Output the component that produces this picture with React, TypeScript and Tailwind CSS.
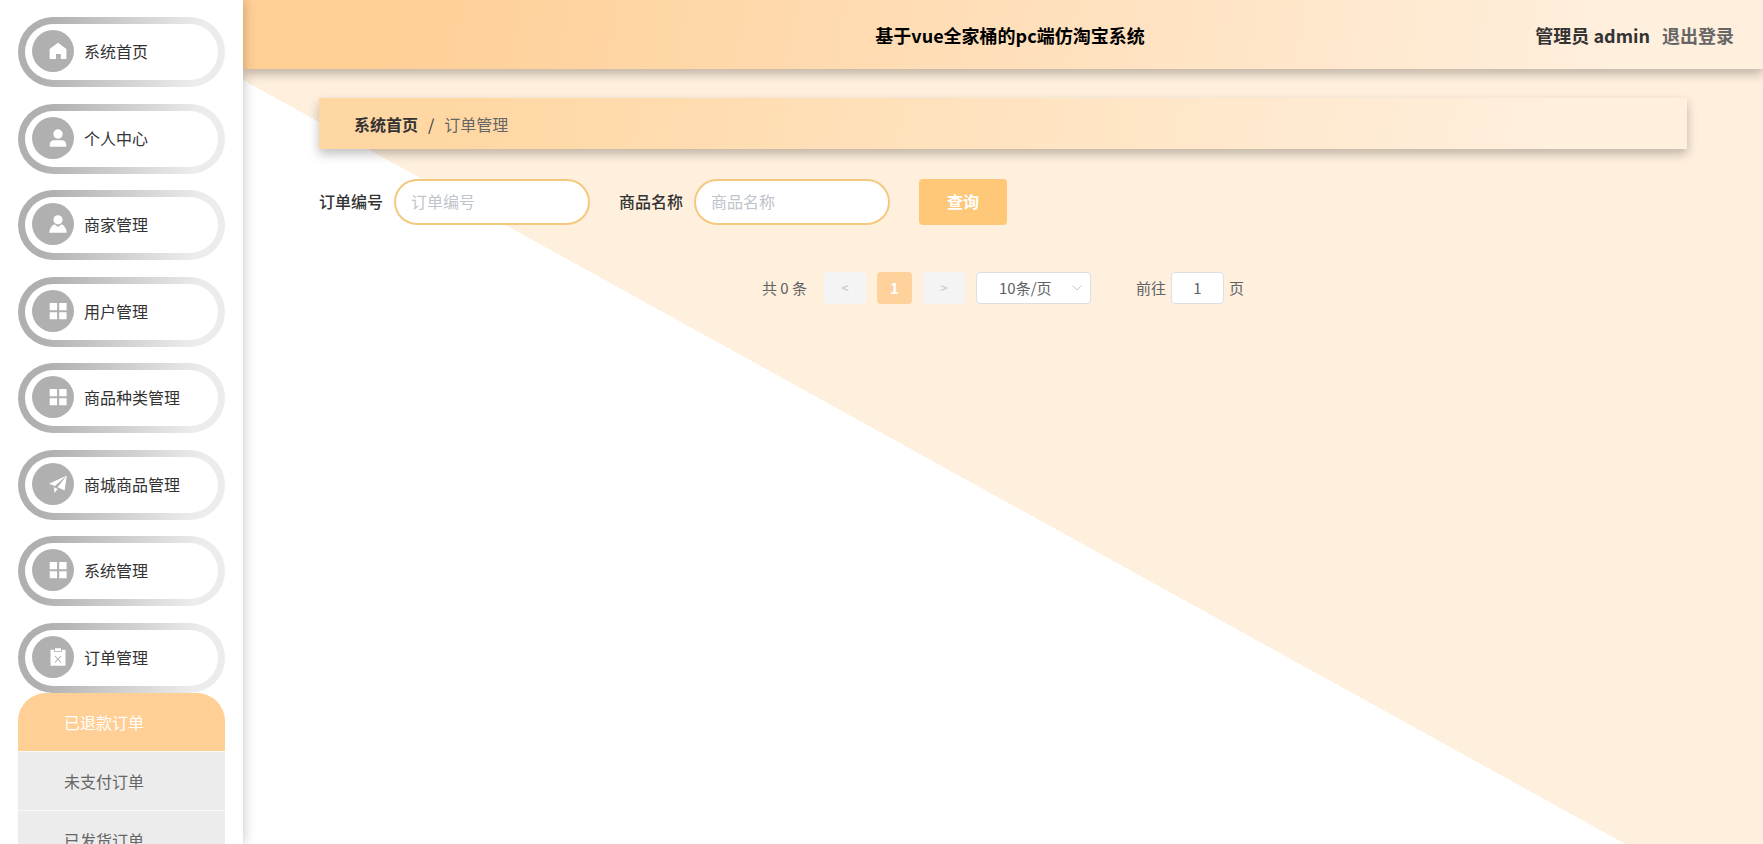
import { useState } from "react";
import type { ReactNode } from "react";

type MenuItem = {
  name: string;
  icon: ReactNode;
};

const GridIcon = () => (
  <svg viewBox="0 0 18 18" className="size-[18px]" fill="currentColor">
    <path d="M.7 1h7.400v7.200H.7zM10.200 1h7.400v7.200h-7.400zM.7 10.200h7.400v7H.7zM10.200 10.200h7.400v7h-7.400z" />
  </svg>
);

const HomeIcon = () => (
  <svg viewBox="0 0 18 18" className="size-[18px]" fill="currentColor">
    <path d="M9 .8 17.400 7v9.200a.8.8 0 0 1-.8.8h-4.800v-5H7v5H1.400a.8.8 0 0 1-.8-.8V7z" />
  </svg>
);

const UserIcon = () => (
  <svg viewBox="0 0 18 18" className="size-[18px]" fill="currentColor">
    <circle cx="9" cy="5" r="4.700" />
    <path d="M.8 17.800v-2.300c0-2.700 1.700-4.300 4.400-4.300h7.600c2.700 0 4.400 1.600 4.400 4.300v2.300z" />
  </svg>
);

const CustomIcon = () => (
  <svg viewBox="0 0 18 18" className="size-[18px]" fill="currentColor">
    <circle cx="9" cy="4.800" r="4.600" />
    <path d="M5.400 9.300 9 12l3.600-2.700c2.900 1.300 4.800 4.300 5.200 8.400H.2c.4-4.100 2.300-7.100 5.200-8.400z" />
  </svg>
);

const PromotionIcon = () => (
  <svg viewBox="0 0 18 18" className="size-[18px]" fill="currentColor">
    <path d="M0 8.800 17.800.4 5.800 11zM17.800.4l-2.200 15.200-7-3.400zM5.100 12.200l3.500 1.800-3.100 4z" />
  </svg>
);

const ReleaseIcon = () => (
  <svg viewBox="0 0 18 18" className="size-[18px]" fill="currentColor">
    <path d="M6 .2h6v3H6z" />
    <path d="M1.500 1.800h3.700v2.300h7.600V1.800h3.700v16h-15z" />
    <path d="m6 8 6 6.500M12 8l-6 6.500" stroke="#b0b0b0" strokeWidth="1.100" />
  </svg>
);

const menu: MenuItem[] = [
  { name: "系统首页", icon: <HomeIcon /> },
  { name: "个人中心", icon: <UserIcon /> },
  { name: "商家管理", icon: <CustomIcon /> },
  { name: "用户管理", icon: <GridIcon /> },
  { name: "商品种类管理", icon: <GridIcon /> },
  { name: "商城商品管理", icon: <PromotionIcon /> },
  { name: "系统管理", icon: <GridIcon /> },
  { name: "订单管理", icon: <ReleaseIcon /> },
];

const orders = ["已退款订单", "未支付订单", "已发货订单"];

const Sidebar = () => {
  const [active, setActive] = useState<string>("已退款订单");
  return (
    <aside className="relative z-20 w-[243px] shrink-0 overflow-hidden bg-white px-[18px] pt-[17px] shadow-[0_0_12px_rgba(0,0,0,0.25)]">
      <ul className="flex h-[676px] flex-col justify-between">
        {menu.map((m) => (
          <li key={m.name}>
            <button className="block w-full rounded-full bg-[linear-gradient(100deg,#b0b0b0_15%,#ececec_85%)] p-[7px]">
              <span className="flex h-14 items-center rounded-full bg-white pb-[2px] pl-[7px]">
                <span className="flex size-[42px] items-center justify-end rounded-full bg-[#b0b0b0] pr-[7px] text-white">
                  {m.icon}
                </span>
                <span className="pl-[10px] text-base text-[#333]">{m.name}</span>
              </span>
            </button>
          </li>
        ))}
      </ul>
      <ul className="overflow-hidden rounded-t-[28px]">
        {orders.map((o) => (
          <li key={o} className="border-b border-[#f8f8f8]">
            <button
              onClick={() => setActive(o)}
              className={`block h-[58px] w-full pl-[46px] text-left text-base ${
                active === o ? "bg-[#ffcf96] text-white" : "bg-[#ececec] text-[#666]"
              }`}
            >
              {o}
            </button>
          </li>
        ))}
      </ul>
    </aside>
  );
};

const Header = () => (
  <header className="relative z-10 grid h-[69px] shrink-0 grid-cols-[1fr_auto_1fr] items-center bg-[linear-gradient(100deg,#ffcf96_10%,#ffefdd_90%)] pr-[29px] pl-[43px] text-lg font-bold shadow-[0_5px_10px_rgba(0,0,0,0.25)]">
    <h1 className="col-start-2 text-black">基于vue全家桶的pc端仿淘宝系统</h1>
    <div className="flex justify-end gap-3">
      <span className="text-[#333]">管理员 admin</span>
      <button className="text-[#666]">退出登录</button>
    </div>
  </header>
);

const SearchForm = () => (
  <form className="mt-[30px] flex items-center" onSubmit={(e) => e.preventDefault()}>
    {["订单编号", "商品名称"].map((f) => (
      <label key={f} className="mr-[29px] flex items-center gap-[11px] text-base font-medium text-[#333]">
        <span className="pb-[2px]">{f}</span>
        <input
          type="text"
          placeholder={f}
          className="h-[46px] w-[196px] rounded-full border-2 border-[#f5c880] bg-white px-[15px] pb-[2px] font-normal outline-none placeholder:text-[#c0c4cc]"
        />
      </label>
    ))}
    <button className="h-[46px] w-[88px] rounded bg-[#fec878] pb-[2px] text-base font-bold text-white">
      查询
    </button>
  </form>
);

const Pagination = () => {
  const [page, setPage] = useState<string>("1");
  return (
    <div className="mt-[47px] flex items-center justify-center text-[15px] text-[#606266]">
      <span className="mr-[17px]">共 0 条</span>
      <button disabled className="mr-[11px] h-8 w-[42px] rounded-sm bg-[#f4f4f5] text-[13px] text-[#c0c4cc]">
        &lt;
      </button>
      <button className="mr-[11px] h-8 w-[35px] rounded-sm bg-[#ffd29c] font-bold text-white">1</button>
      <button disabled className="mr-[11px] h-8 w-[42px] rounded-sm bg-[#f4f4f5] text-[13px] text-[#c0c4cc]">
        &gt;
      </button>
      <div className="relative mr-[45px]">
        <select
          aria-label="每页条数"
          className="block h-8 w-[115px] appearance-none rounded border border-[#dcdfe6] bg-white pl-[22px] outline-none"
        >
          <option>10条/页</option>
          <option>20条/页</option>
        </select>
        <svg
          viewBox="0 0 12 12"
          className="pointer-events-none absolute top-[10px] right-2 size-3"
          fill="none"
          stroke="#c0c4cc"
        >
          <path d="m1.500 3.500 4.500 4.500 4.500-4.500" />
        </svg>
      </div>
      <label className="flex items-center gap-[5px]">
        前往
        <input
          type="text"
          value={page}
          onChange={(e) => setPage(e.target.value)}
          className="h-8 w-[53px] rounded border border-[#dcdfe6] bg-white pb-[2px] text-center outline-none"
        />
        页
      </label>
    </div>
  );
};

const App = () => {
  return (
    <div className="flex h-screen overflow-hidden bg-white font-['Noto_Sans_CJK_SC',sans-serif]">
      <Sidebar />
      <div className="flex min-w-0 flex-1 flex-col">
        <Header />
        <main className="flex-1 bg-[#ffefdd] bg-[linear-gradient(to_top_right,#fff_50%,#ffefdd_50%)] bg-[length:100%_840px] bg-[position:0_11px] bg-no-repeat px-[5%] pt-[29px]">
          <nav className="flex h-[51px] items-center gap-[10px] bg-[linear-gradient(100deg,#ffd7a3_10%,#ffefdd_90%)] px-[35px] text-base shadow-[0_5px_10px_rgba(0,0,0,0.25)]">
            <a href="#" className="font-bold text-[#333]">
              系统首页
            </a>
            <span className="text-[#333]">/</span>
            <span className="text-[#666]">订单管理</span>
          </nav>
          <SearchForm />
          <Pagination />
        </main>
      </div>
    </div>
  );
};
export default App;
